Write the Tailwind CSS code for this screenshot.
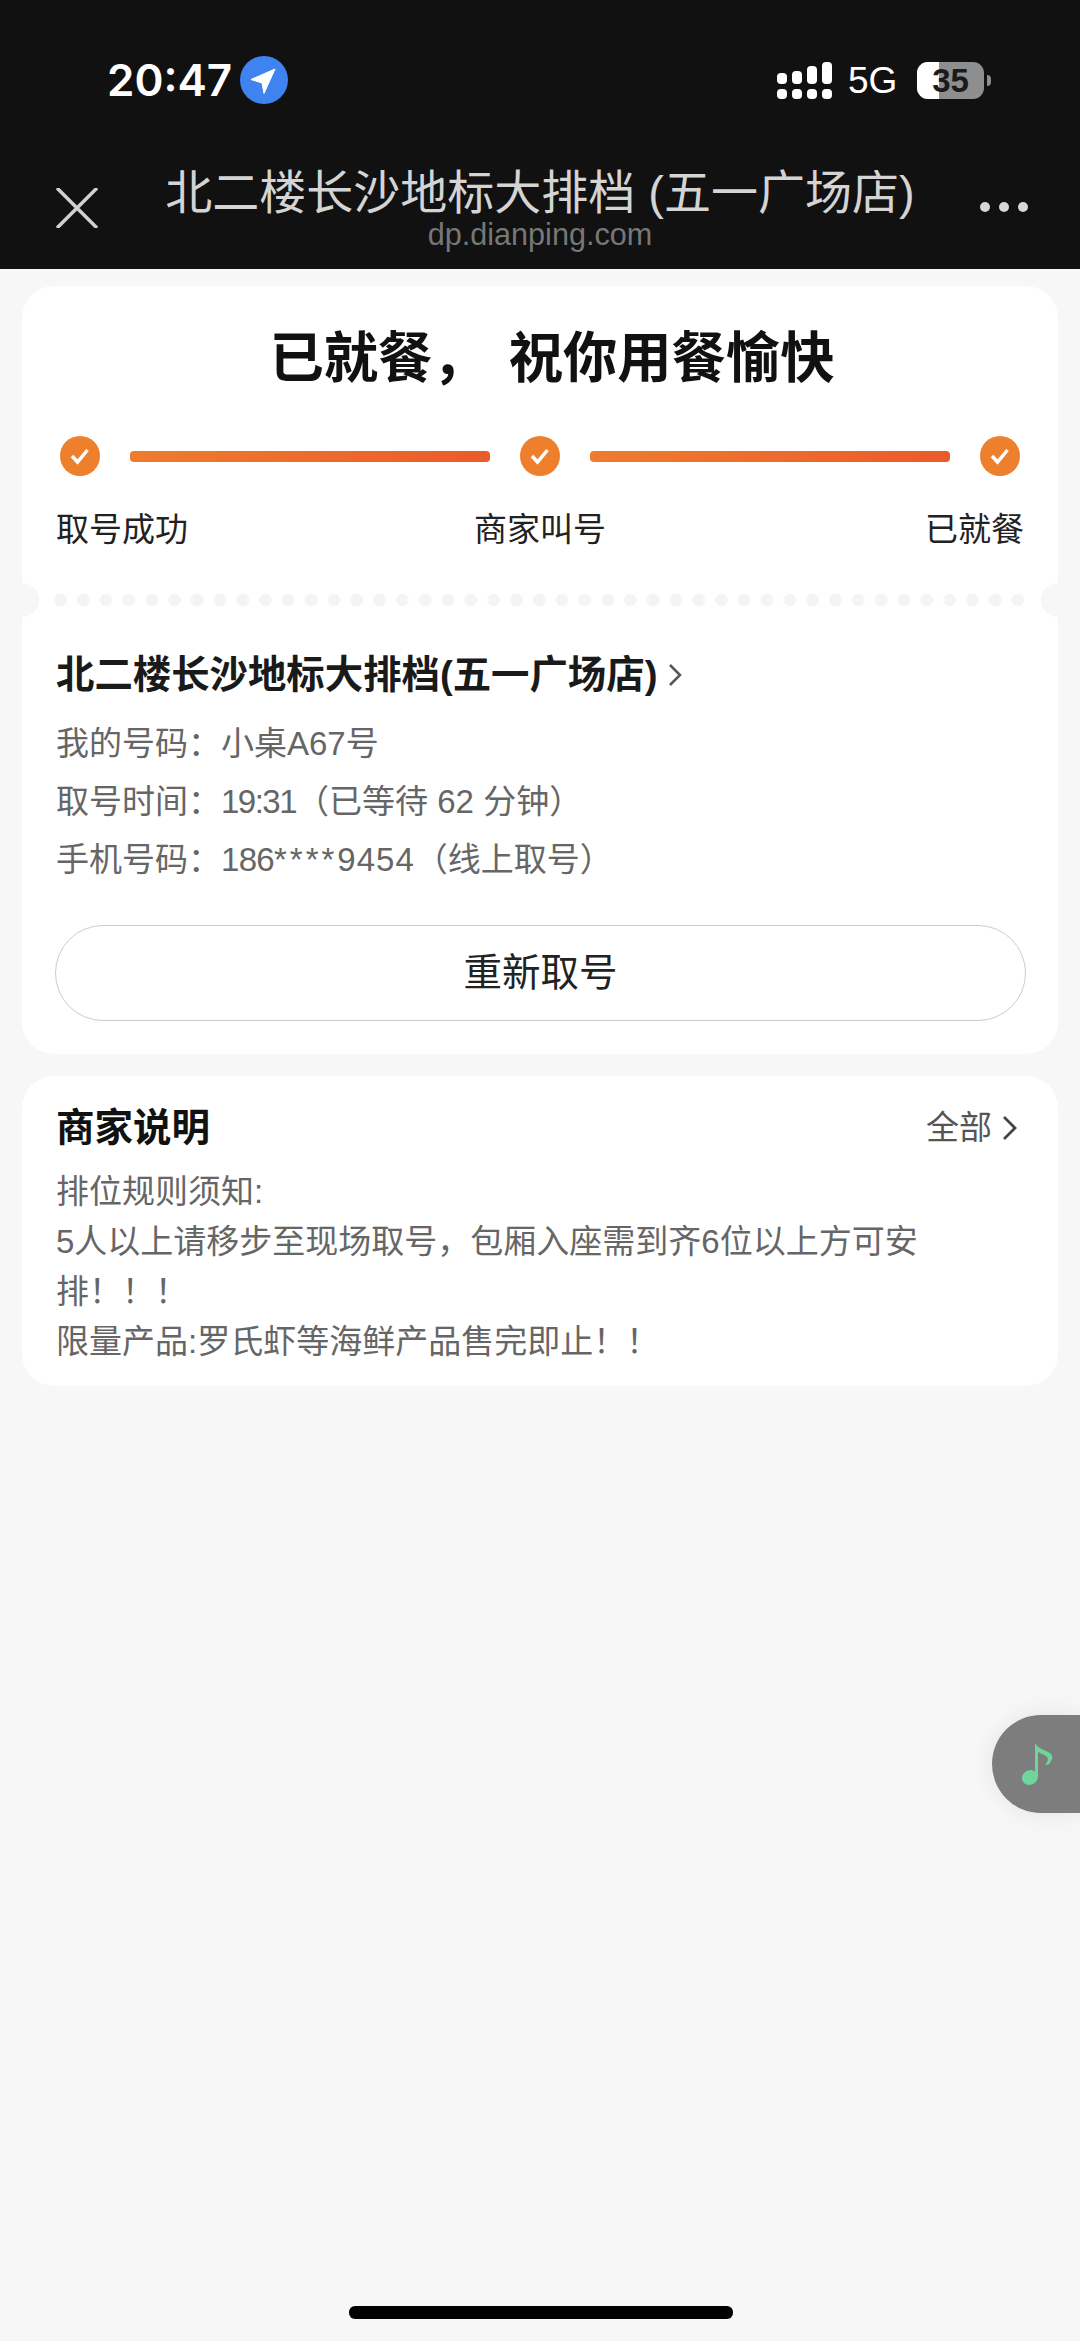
<!DOCTYPE html>
<html lang="zh-CN">
<head>
    <meta charset="UTF-8">
    <meta name="viewport" content="width=device-width, initial-scale=1.0">
    <title>排队详情</title>
    <script src="https://cdn.jsdelivr.net/npm/@tailwindcss/browser@4"></script>
</head>
<body class="font-['Liberation_Sans','Noto_Sans_CJK_SC',sans-serif] bg-[#f7f7f7]">
<div class="relative w-[1080px] h-[2341px] overflow-hidden">

    <!-- status bar + nav -->
    <header class="h-[269px] bg-[#111111] flex flex-col">
        <div class="h-[160px] flex items-center pl-[107px] pr-[89px]">
            <span class="w-[125px] font-['Inter',sans-serif] font-semibold text-[44px] leading-none text-white">20:47</span>
            <span class="ml-[8px] w-[48px] h-[48px] rounded-full bg-[#3f83f0] flex items-center justify-center">
                <svg width="30" height="30" viewBox="0 0 30 30"><path d="M26 4 L2 14.5 L13 18 L15 28.5 Z" fill="#fff" stroke="#fff" stroke-width="1" stroke-linejoin="round"/></svg>
            </span>
            <div class="ml-auto flex items-center">
                <div class="grid grid-cols-4 gap-x-[4.5px] items-end w-[55px]">
                    <div class="h-[11px] rounded-[4px] bg-white"></div>
                    <div class="h-[13px] rounded-[4px] bg-white"></div>
                    <div class="h-[18px] rounded-[4px] bg-white"></div>
                    <div class="h-[22px] rounded-[4px] bg-white"></div>
                    <div class="mt-[5px] h-[10px] rounded-[4px] bg-white"></div>
                    <div class="mt-[5px] h-[10px] rounded-[4px] bg-white"></div>
                    <div class="mt-[5px] h-[10px] rounded-[4px] bg-white"></div>
                    <div class="mt-[5px] h-[10px] rounded-[4px] bg-white"></div>
                </div>
                <span class="ml-[16px] w-[50px] text-[37px] leading-none text-white">5G</span>
                <div class="ml-[19px] relative w-[67px] h-[37px] rounded-[11px] overflow-hidden bg-[#8e8e8e] flex items-center justify-center">
                    <div class="absolute left-0 top-0 bottom-0 w-[22px] bg-white"></div>
                    <span class="relative font-bold text-[33px] leading-none text-[#1a1a1a]">35</span>
                </div>
                <div class="ml-[3px] w-[4px] h-[11px] rounded-r-full bg-[#8e8e8e]"></div>
            </div>
        </div>
        <div class="relative pt-[8px] flex flex-col items-center">
            <div class="text-[47px] leading-[50px] text-[#d4d4d4]">北二楼长沙地标大排档 (五一广场店)</div>
            <div class="text-[30.6px] leading-[32px] text-[#777777]">dp.dianping.com</div>
            <svg class="absolute left-[56px] top-[28px]" width="42" height="40" viewBox="0 0 42 40">
                <path d="M1 0 L41 40 M41 0 L1 40" stroke="#d0d0d0" stroke-width="3.5" fill="none"/>
            </svg>
            <div class="absolute left-[980px] top-[42px] flex gap-[9px]">
                <span class="w-[10px] h-[10px] rounded-full bg-[#d8d8d8]"></span>
                <span class="w-[10px] h-[10px] rounded-full bg-[#d8d8d8]"></span>
                <span class="w-[10px] h-[10px] rounded-full bg-[#d8d8d8]"></span>
            </div>
        </div>
    </header>

    <main class="px-[22px] pt-[17px] flex flex-col gap-[22px]">
        <!-- queue card -->
        <section class="bg-white rounded-[32px] h-[768px] pt-[41px]">
            <h1 class="h-[64px] pl-[24px] text-center text-[54.3px] leading-[64px] font-bold text-[#111111]">已就餐，<span class="inline-block w-[22px]"></span>祝你用餐愉快</h1>

            <div class="mt-[45px] mx-[38px] flex items-center gap-[30px]">
                <span class="shrink-0 w-[40px] h-[40px] rounded-full bg-[#ee7f2d] flex items-center justify-center">
                    <svg width="22" height="22" viewBox="0 0 22 22"><path d="M3 11 L8.5 17 L18.5 5" stroke="#fff" stroke-width="3.5" fill="none"/></svg>
                </span>
                <div class="flex-1 h-[11px] rounded-[4px] bg-gradient-to-r from-[#ee7c2e] to-[#ec5a2b]"></div>
                <span class="shrink-0 w-[40px] h-[40px] rounded-full bg-[#ee7f2d] flex items-center justify-center">
                    <svg width="22" height="22" viewBox="0 0 22 22"><path d="M3 11 L8.5 17 L18.5 5" stroke="#fff" stroke-width="3.5" fill="none"/></svg>
                </span>
                <div class="flex-1 h-[11px] rounded-[4px] bg-gradient-to-r from-[#ee7c2e] to-[#ec5a2b]"></div>
                <span class="shrink-0 w-[40px] h-[40px] rounded-full bg-[#ee7f2d] flex items-center justify-center">
                    <svg width="22" height="22" viewBox="0 0 22 22"><path d="M3 11 L8.5 17 L18.5 5" stroke="#fff" stroke-width="3.5" fill="none"/></svg>
                </span>
            </div>

            <div class="mt-[32px] mx-[34px] grid grid-cols-3 text-[33px] leading-[44px] text-[#222222]">
                <span>取号成功</span>
                <span class="text-center">商家叫号</span>
                <span class="text-right">已就餐</span>
            </div>

            <!-- ticket tear line -->
            <div class="relative mt-[31px] h-[34px]">
                <div class="mx-[27px] h-full bg-[radial-gradient(circle,#f4f4f4_6px,transparent_6.5px)] bg-[length:22.8px_34px] bg-repeat-x"></div>
                <span class="absolute left-[-17px] top-0 w-[34px] h-[34px] rounded-full bg-[#f7f7f7]"></span>
                <span class="absolute right-[-17px] top-0 w-[34px] h-[34px] rounded-full bg-[#f7f7f7]"></span>
            </div>

            <div class="mt-[33px] mx-[34px] flex items-center">
                <h2 class="text-[38.4px] leading-[50px] font-bold text-[#1a1a1a]">北二楼长沙地标大排档(五一广场店)</h2>
                <svg class="ml-[11px]" width="14" height="24" viewBox="0 0 14 24"><path d="M2 2 L12 12 L2 22" stroke="#555" stroke-width="2.5" fill="none"/></svg>
            </div>
            <div class="mt-[15px] mx-[34px] text-[33px] leading-[58px] text-[#666666]">
                <p>我的号码：小桌A67号</p>
                <p>取号时间：<span class="tracking-[-1.5px]">19:31</span>（已等待 62 分钟）</p>
                <p>手机号码：<span class="tracking-[-0.7px]">186</span><span class="tracking-[3px]">****</span><span class="tracking-[1px]">9454</span>（线上取号）</p>
            </div>
            <button class="mt-[36px] mx-[33px] block w-[971px] h-[96px] rounded-full border border-[#cccccc] text-[38.5px] text-[#222222]">重新取号</button>
        </section>

        <!-- merchant notes -->
        <section class="bg-white rounded-[32px] h-[310px] px-[34px] pt-[27px]">
            <div class="flex items-center justify-between h-[50px]">
                <h2 class="text-[38.5px] leading-[50px] font-bold text-[#111111]">商家说明</h2>
                <div class="flex items-center mr-[6px]">
                    <span class="text-[33px] text-[#555555]">全部</span>
                    <svg class="ml-[10px]" width="16" height="26" viewBox="0 0 16 26"><path d="M2 2 L13 13 L2 24" stroke="#444" stroke-width="2.8" fill="none"/></svg>
                </div>
            </div>
            <div class="mt-[14px] w-[880px] text-[33px] leading-[50px] text-[#666666]">
                <p>排位规则须知:</p>
                <p>5人以上请移步至现场取号，包厢入座需到齐6位以上方可安排！！！</p>
                <p>限量产品:罗氏虾等海鲜产品售完即止！！</p>
            </div>
        </section>
    </main>

    <!-- floating music button -->
    <div class="absolute right-0 top-[1715px] w-[88px] h-[98px] rounded-l-[49px] bg-[#7d7d7d] shadow-[0_0_24px_rgba(0,0,0,0.08)] flex items-center">
        <svg class="ml-[30px]" width="32" height="42" viewBox="0 0 32 42">
            <path d="M13 0 C15 4 19 6 24 8 C30 10 32 14 29 18 C28 21 26 22 23 22 C26 19 27 15 24 13 C21 11 18 10 16 9 L16 33 C16 38 12 42 7 42 C3 42 0 39 0 35 C0 30 5 27 9 27 C11 27 12 28 13 29 Z" fill="#6fd59b"/>
        </svg>
    </div>

    <!-- home indicator -->
    <div class="absolute left-[349px] top-[2306px] w-[384px] h-[13px] rounded-[6px] bg-black"></div>
</div>
</body>
</html>
